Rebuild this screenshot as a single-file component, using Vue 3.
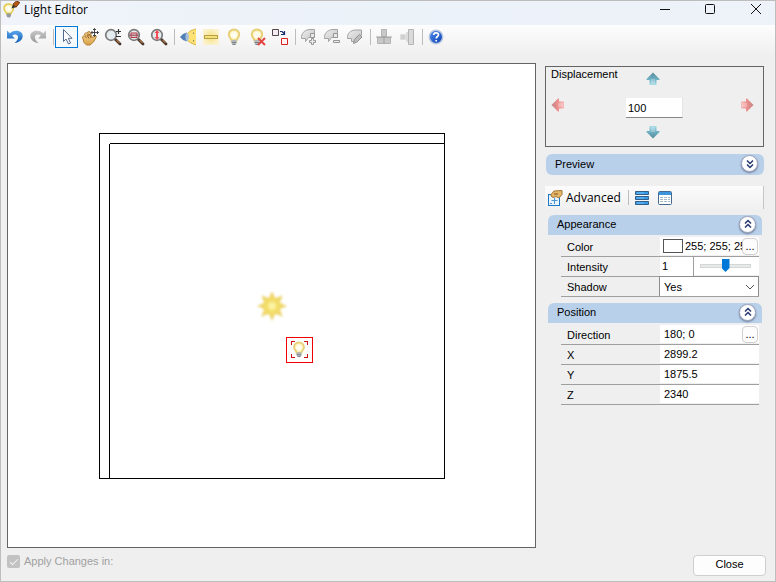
<script setup>
import { ref } from 'vue'

const displacement = ref('100')
const color = ref('255; 255; 255')
const intensity = ref('1')
const level = ref(50)
const shadow = ref('Yes')
const direction = ref('180; 0')
const coordinates = ref([
  { name: 'X', value: '2899.2' },
  { name: 'Y', value: '1875.5' },
  { name: 'Z', value: '2340' }
])
</script>

<template>
  <div class="window">
    <svg class="defs" aria-hidden="true">
      <defs>
        <linearGradient id="blue" x1="0" y1="0" x2="0" y2="1"><stop offset="0" stop-color="#5aa5ee" /><stop offset="1" stop-color="#1360b5" /></linearGradient>
        <linearGradient id="grey" x1="0" y1="0" x2="0" y2="1"><stop offset="0" stop-color="#c9c9c9" /><stop offset="1" stop-color="#989898" /></linearGradient>
        <linearGradient id="greyfill" x1="0" y1="0" x2="1" y2="1"><stop offset="0" stop-color="#ededed" /><stop offset="1" stop-color="#c4c4c4" /></linearGradient>
        <linearGradient id="teal" x1="0" y1="0" x2="0" y2="1"><stop offset="0" stop-color="#57899a" /><stop offset="0.55" stop-color="#6fb2c4" /><stop offset="1" stop-color="#a9dce8" /></linearGradient>
        <linearGradient id="pink" x1="0" y1="0" x2="0" y2="1"><stop offset="0" stop-color="#c48686" /><stop offset="0.55" stop-color="#ee8f8f" /><stop offset="1" stop-color="#f8bcbc" /></linearGradient>
        <linearGradient id="ball" x1="0" y1="0" x2="1" y2="1"><stop offset="0" stop-color="#4d8cf0" /><stop offset="1" stop-color="#0b3fae" /></linearGradient>
        <linearGradient id="hand" x1="0" y1="0" x2="0" y2="1"><stop offset="0" stop-color="#f9dc9c" /><stop offset="1" stop-color="#d9a045" /></linearGradient>
        <radialGradient id="glass"><stop offset="0" stop-color="#ffffff" /><stop offset="0.55" stop-color="#fffbe0" /><stop offset="1" stop-color="#f3e08c" /></radialGradient>
        <radialGradient id="glow"><stop offset="0" stop-color="#f8e27a" /><stop offset="0.6" stop-color="#f9ebaa" /><stop offset="1" stop-color="#fbf2cc" /></radialGradient>
        <radialGradient id="sun"><stop offset="0" stop-color="#fffcc0" /><stop offset="0.4" stop-color="#f3dc63" /><stop offset="1" stop-color="#e9d382" /></radialGradient>
        <filter id="soft" x="-20%" y="-20%" width="140%" height="140%"><feGaussianBlur stdDeviation="1" /></filter>
      </defs>
      <symbol id="bulb" viewBox="0 0 18 18">
        <path d="M9 1.500C5.700 1.500 3.700 3.800 3.700 6.500C3.700 9 6 10.300 6.400 12.500H11.600C12 10.300 14.300 9 14.300 6.500C14.300 3.800 12.300 1.500 9 1.500Z" fill="url(#glass)" stroke="#e6cf74" stroke-width="1.800" />
        <path d="M6.500 12H11.500V15L10.200 17H7.800L6.500 15Z" fill="#b4b8ba" />
        <path d="M6.500 14.500H11.500M7.500 16.500H10.500" stroke="#7c8488" />
      </symbol>
      <symbol id="lens" viewBox="0 0 18 18">
        <path d="M11 11L16 16" stroke="#46352c" stroke-width="2.800" stroke-linecap="round" />
        <path d="M12.500 12L15.500 15" stroke="#a9713f" stroke-width="1.300" />
        <circle cx="7" cy="7" r="5.300" fill="#e4ecf0" stroke="#7a7a7a" stroke-width="1.700" />
      </symbol>
      <symbol id="lamp" viewBox="0 0 18 18">
        <path d="M1.500 8.500C2 4.500 5.500 1.500 10 1.500H14.500V9.500H8.500L5.500 13.500V10.500H1.500Z" fill="url(#greyfill)" stroke="#a3a3a3" />
        <path d="M10.500 5.500H14.500V9.500H10.500Z" fill="#e8e8e8" stroke="#969696" />
      </symbol>
      <symbol id="arrow-shape" viewBox="0 0 14 14">
        <path d="M7 0.500L13.500 7V8H10.500V13H3.500V8H0.500V7Z" />
        <path d="M5 12V7H9V12Z" fill="#ffffff" fill-opacity="0.250" />
      </symbol>
    </svg>

    <header class="titlebar">
      <svg class="app-icon" viewBox="0 0 18 18" aria-hidden="true">
        <path d="M7 3C3.800 3 2 5 2 7.500C2 9.700 4 10.800 4.500 12.500H9C9.500 10.800 11.500 9.700 11.500 7.500C11.500 5 9.700 3 7 3Z" fill="url(#glass)" stroke="#e2cb50" stroke-width="1.500" />
        <path d="M4.500 12.500H9V15L7.800 16.500H5.700L4.500 15Z" fill="#969a9b" />
        <path d="M9.500 7.500L11 3.500L14 6.200Z" fill="#333" />
        <path d="M11 3.200L14.500 0L17.800 1.500L14 6.200Z" fill="#b45a14" stroke="#75350a" />
      </svg>
      <h1>Light Editor</h1>
      <div class="window-buttons">
        <button type="button" aria-label="Minimize"><svg viewBox="0 0 12 12"><path d="M1 6.500H11" /></svg></button>
        <button type="button" aria-label="Maximize"><svg viewBox="0 0 12 12"><rect x="1.500" y="1.500" width="9" height="9" rx="1" /></svg></button>
        <button type="button" aria-label="Close window"><svg viewBox="0 0 12 12"><path d="M1 1L11 11M11 1L1 11" /></svg></button>
      </div>
    </header>

    <nav class="toolbar" aria-label="Tools">
      <button type="button" aria-label="Undo"><svg viewBox="0 0 18 18"><path d="M1 2.500V10.500H9L6.200 7.800C8 5.800 11.500 6 12 8.500C12.300 11 11 13 8.500 15C13.500 14.500 17 11.500 16.700 7.500C16.300 2.500 8.500 1 3.800 5.300Z" fill="url(#blue)" /></svg></button>
      <button type="button" aria-label="Redo" disabled><svg viewBox="0 0 18 18"><path d="M17 2.500V10.500H9L11.800 7.800C10 5.800 6.500 6 6 8.500C5.700 11 7 13 9.500 15C4.500 14.500 1 11.500 1.300 7.500C1.700 2.500 9.500 1 14.200 5.300Z" fill="url(#grey)" /></svg></button>
      <span class="sep"></span>
      <button type="button" class="active" aria-label="Select"><svg viewBox="0 0 18 18"><path d="M5.500 1.500V13.500L8 11L10.500 16L12.500 15L10.300 10.300H14Z" fill="#fff" stroke="#55698f" /></svg></button>
      <button type="button" aria-label="Pan"><svg viewBox="0 0 18 18"><path d="M1.500 9L3 7.500L5.500 10L3.500 6L5 4.500L8 8L6.500 4L8.500 3.500L10.500 7.500L11.500 10L14 7.500L15.500 8.500L12.500 14L9 17H5.500L3 14.500Z" fill="url(#hand)" stroke="#b67f34" /><path d="M6 7L8 10.500M8.500 6L10 10" stroke="#8c5c22" /><path d="M13.500 0.500V8M10 4.500H17.500M12 2L13.500 0.500L15 2M12 7L13.500 8.500L15 7M11.500 3L10 4.500L11.500 6M16 3L17.500 4.500L16 6" fill="none" stroke="#333" stroke-width="0.900" /></svg></button>
      <button type="button" aria-label="Zoom in or out"><svg viewBox="0 0 18 18"><use href="#lens" /><path d="M12 3.500H17M14.500 1V6M12 8.500H17" stroke="#333" stroke-width="1.200" /></svg></button>
      <button type="button" aria-label="Zoom window"><svg viewBox="0 0 18 18"><use href="#lens" /><path d="M4 5H10V9.500H4Z" fill="#d8c9cb" stroke="#bc3746" /><path d="M2.500 7.200H11.500" stroke="#8f3f4b" /></svg></button>
      <button type="button" aria-label="Zoom extents"><svg viewBox="0 0 18 18"><use href="#lens" /><path d="M7 2L9.500 5H8V9H9.500L7 12L4.500 9H6V5H4.500Z" fill="#f04d59" /></svg></button>
      <span class="sep"></span>
      <button type="button" aria-label="Spot light"><svg viewBox="0 0 18 18"><path d="M7 6.500L12 2.500L17 1V17L12 15L7 11.500Z" fill="#ffe174" /><path d="M8 6L12 2.500L17 1M8 12L12 15L17 17" fill="none" stroke="#dcb73f" /><path d="M1 9L4 6L8 4.500V13.500L4 12Z" fill="#527fb5" /><path d="M8 4.500C10.500 6 10.500 12 8 13.500C6 12 6 6 8 4.500Z" fill="#a7c0dd" /><path d="M14.500 4.500V6M14.500 12V13.500" stroke="#857f68" /></svg></button>
      <button type="button" aria-label="Linear light"><svg viewBox="0 0 18 18"><rect x="1" y="1" width="16" height="16" fill="url(#glow)" /><rect x="2.500" y="7.500" width="13" height="3" fill="#f4df7a" stroke="#b5a247" /></svg></button>
      <button type="button" aria-label="Point light"><svg viewBox="0 0 18 18"><use href="#bulb" /></svg></button>
      <button type="button" aria-label="Delete light"><svg viewBox="0 0 18 18"><use href="#bulb" /><path d="M10 10L17 17M17 10L10 17" stroke="#e14444" stroke-width="2" /></svg></button>
      <button type="button" aria-label="Replace light"><svg viewBox="0 0 18 18"><path d="M1.500 1.500H7.500V7.500H1.500Z" fill="#f4edf1" stroke="#55454d" /><path d="M10.500 10.500H16.500V16.500H10.500Z" fill="#fff2f2" stroke="#dc2020" /><path d="M9 3.500H11L13 5.500M13.500 3V6.500H10" fill="none" stroke="#192e70" stroke-width="1.200" /></svg></button>
      <span class="sep"></span>
      <button type="button" aria-label="Add lamp" disabled><svg viewBox="0 0 18 18"><use href="#lamp" /><path d="M11.500 10.500H13.500V12.500H15.500V14.500H13.500V16.500H11.500V14.500H9.500V12.500H11.500Z" fill="#eee" stroke="#969696" /></svg></button>
      <button type="button" aria-label="Remove lamp" disabled><svg viewBox="0 0 18 18"><use href="#lamp" /><path d="M10.500 12.500H16.500V14.500H10.500Z" fill="#eee" stroke="#969696" /></svg></button>
      <button type="button" aria-label="Edit lamp" disabled><svg viewBox="0 0 18 18"><path d="M1.500 8.500C2 4.500 5.500 2 10 2H15.500V7L9 13.500H5.500V10.500H1.500Z" fill="url(#greyfill)" stroke="#a3a3a3" /><path d="M7.500 15.500L8.500 11.500L13.500 6.500L16 9L11 14Z" fill="#bdbdbd" stroke="#919191" /></svg></button>
      <span class="sep"></span>
      <button type="button" aria-label="Align horizontally" disabled><svg viewBox="0 0 18 18"><path d="M6.500 1.500H11.500V8.500H6.500ZM2.500 9.500H15.500V15.500H2.500Z" fill="#c8c8c8" stroke="#b4b4b4" /><path d="M1 9H17M9 9V16" stroke="#a0a0a0" /></svg></button>
      <button type="button" aria-label="Align vertically" disabled><svg viewBox="0 0 18 18"><path d="M2.500 6.500H7.500V11.500H2.500Z" fill="#d0d0d0" stroke="#dedede" /><path d="M10.500 1.500H15.500V16.500H10.500Z" fill="#dadada" stroke="#b4b4b4" /><path d="M9 4V14" stroke="#c1c1c1" /></svg></button>
      <span class="sep"></span>
      <button type="button" aria-label="Help"><svg viewBox="0 0 18 18"><circle cx="9" cy="9" r="6.700" fill="url(#ball)" stroke="#b9c8e0" stroke-width="1.500" /><path d="M6.700 7C6.700 4 11.500 4.200 11.500 6.800C11.500 8.500 9.200 8.500 9.200 10.500M9.200 12V13.500" fill="none" stroke="#fff" stroke-width="1.700" /></svg></button>
    </nav>

    <main class="content">
      <section class="canvas" aria-label="Plan view">
        <svg viewBox="0 0 527 483">
          <g fill="none" stroke="#000" shape-rendering="crispEdges">
            <rect x="91.500" y="69.500" width="345" height="345" />
            <path d="M101.500 414V80M102 79.500H436" />
          </g>
          <g transform="translate(264 242)" filter="url(#soft)">
            <path d="M0 -15L3.300 -8L10.800 -10.800L8 -3.300L15 0L8 3.300L10.800 10.800L3.300 8L0 15L-3.300 8L-10.800 10.800L-8 3.300L-15 0L-8 -3.300L-10.800 -10.800L-3.300 -8Z" fill="url(#sun)" />
          </g>
          <rect x="278.500" y="273.500" width="26" height="25" fill="#fff" stroke="#f00000" shape-rendering="crispEdges" />
          <use href="#bulb" x="282" y="277" width="18" height="17" />
          <path d="M287 277.500H283.500V281M296 277.500H299.500V281M287 293.500H283.500V290M296 293.500H299.500V290" fill="none" stroke="#d01010" shape-rendering="crispEdges" />
        </svg>
      </section>

      <aside class="side">
        <div class="displacement">
          <label for="displacement">Displacement</label>
          <button type="button" class="up" aria-label="Move up"><svg viewBox="0 0 14 14"><use href="#arrow-shape" fill="url(#teal)" /></svg></button>
          <button type="button" class="left" aria-label="Move left"><svg viewBox="0 0 14 14"><use href="#arrow-shape" fill="url(#pink)" transform="rotate(-90 7 7)" /></svg></button>
          <input id="displacement" v-model="displacement" type="text">
          <button type="button" class="right" aria-label="Move right"><svg viewBox="0 0 14 14"><use href="#arrow-shape" fill="url(#pink)" transform="rotate(90 7 7)" /></svg></button>
          <button type="button" class="down" aria-label="Move down"><svg viewBox="0 0 14 14"><use href="#arrow-shape" fill="url(#teal)" transform="rotate(180 7 7)" /></svg></button>
        </div>

        <div class="bar preview">
          <h2>Preview</h2>
          <button type="button" aria-label="Expand preview"><svg viewBox="0 0 12 12"><path d="M3 2.500L6 5.500L9 2.500M3 6.500L6 9.500L9 6.500" /></svg></button>
        </div>

        <div class="tools">
          <button type="button" class="advanced">
            <svg viewBox="0 0 16 16" aria-hidden="true"><rect x="1.500" y="4.500" width="11" height="11" fill="#eaf4fd" stroke="#1d78ca" /><path d="M4.500 10.500H10.500M7.500 8V14M3 13.500H5" stroke="#4c94d3" /><path d="M4 4.500L7 1L15 0.500V4.500L12 8L9 6.500L6 7.500L4 6Z" fill="#e5b568" stroke="#a0763a" /><path d="M7 4H11" stroke="#7c5524" /></svg>
            Advanced
          </button>
          <span class="sep"></span>
          <button type="button" aria-label="Categories"><svg viewBox="0 0 16 16"><path d="M1.500 1.500H14.500V4.500H1.500ZM1.500 6.500H14.500V9.500H1.500ZM1.500 11.500H14.500V14.500H1.500Z" fill="#369be9" stroke="#345e86" /><path d="M3 3H10M3 8H10M3 13H10" stroke="#70bdf5" /></svg></button>
          <button type="button" aria-label="List"><svg viewBox="0 0 16 16"><rect x="1.500" y="1.500" width="13" height="13" rx="1" fill="#fff" stroke="#436a92" /><path d="M2 3.500H14" stroke="#3b95dd" stroke-width="3" /><path d="M3 7.500H6M7 7.500H10M11 7.500H13M3 9.500H6M7 9.500H10M11 9.500H13M3 11.500H6M7 11.500H10M11 11.500H13" stroke="#a6b9cc" /></svg></button>
        </div>

        <section class="group">
          <div class="bar">
            <h2>Appearance</h2>
            <button type="button" aria-label="Collapse appearance"><svg viewBox="0 0 12 12"><path d="M3 5.500L6 2.500L9 5.500M3 9.500L6 6.500L9 9.500" /></svg></button>
          </div>
          <div class="rows">
            <div class="row">
              <label for="color">Color</label>
              <div class="value">
                <span class="swatch"></span>
                <input id="color" v-model="color" class="tight" type="text">
                <button type="button" class="more" aria-label="Choose color">...</button>
              </div>
            </div>
            <div class="row">
              <label for="intensity">Intensity</label>
              <div class="value">
                <input id="intensity" v-model="intensity" class="amount" type="text">
                <input v-model="level" class="slider" type="range" min="0" max="100" aria-label="Intensity level">
              </div>
            </div>
            <div class="row">
              <label for="shadow">Shadow</label>
              <div class="value boxed">
                <select id="shadow" v-model="shadow">
                  <option>Yes</option>
                  <option>No</option>
                </select>
                <svg class="chevron" viewBox="0 0 10 6" aria-hidden="true"><path d="M1 1L5 5L9 1" /></svg>
              </div>
            </div>
          </div>
        </section>

        <section class="group">
          <div class="bar">
            <h2>Position</h2>
            <button type="button" aria-label="Collapse position"><svg viewBox="0 0 12 12"><path d="M3 5.500L6 2.500L9 5.500M3 9.500L6 6.500L9 9.500" /></svg></button>
          </div>
          <div class="rows">
            <div class="row">
              <label for="direction">Direction</label>
              <div class="value">
                <input id="direction" v-model="direction" type="text">
                <button type="button" class="more" aria-label="Edit direction">...</button>
              </div>
            </div>
            <div v-for="axis in coordinates" :key="axis.name" class="row">
              <label :for="'axis-' + axis.name">{{ axis.name }}</label>
              <div class="value">
                <input :id="'axis-' + axis.name" v-model="axis.value" type="text">
              </div>
            </div>
          </div>
        </section>
      </aside>
    </main>

    <footer class="footer">
      <label class="apply">
        <input type="checkbox" checked disabled>
        Apply Changes in:
      </label>
      <button type="button" class="close">Close</button>
    </footer>
  </div>
</template>

<style>
body {
  margin: 0;
}
</style>

<style scoped>
.window {
  display: flex;
  flex-direction: column;
  box-sizing: border-box;
  min-height: 100vh;
  border: 1px solid #bdbdbd;
  background: #efefef;
  color: #000;
  font: 11px/14px "Liberation Sans", sans-serif;
}

.window *,
.window *::before {
  box-sizing: border-box;
}

.defs {
  position: absolute;
  width: 0;
  height: 0;
}

svg {
  display: block;
}

button {
  display: flex;
  align-items: center;
  justify-content: center;
  margin: 0;
  padding: 0;
  border: 0;
  background: none;
  color: inherit;
  font: inherit;
}

input,
select {
  min-width: 0;
  margin: 0;
  border: 0;
  border-radius: 0;
  outline: 0;
  background: #fff;
  color: inherit;
  font: inherit;
}

h1,
h2 {
  margin: 0;
  font: inherit;
}

.titlebar {
  display: flex;
  align-items: flex-start;
  height: 24px;
  padding-left: 1px;
  background: linear-gradient(90deg, #f0f3fa, #ebf2f8 50%, #eef2f9);
}

.app-icon {
  width: 18px;
  height: 18px;
}

.titlebar h1 {
  flex: 1;
  padding-left: 4px;
  font: 12px/18px "Open Sans", sans-serif;
}

.window-buttons {
  display: flex;
}

.window-buttons button {
  width: 45px;
  height: 16px;
}

.window-buttons button:last-child {
  width: 38px;
  margin-left: 5px;
}

.window-buttons svg {
  width: 12px;
  height: 12px;
  fill: none;
  stroke: #111;
}

.toolbar {
  display: flex;
  height: 38px;
  padding: 1px 2px;
  background: linear-gradient(#fdfdfd, #efefef 80%);
}

.toolbar button {
  width: 23px;
  height: 22px;
}

.toolbar svg {
  width: 18px;
  height: 18px;
}

.toolbar .active {
  border: 1px solid #0078d7;
  background: #f7fafd;
}

.toolbar .sep {
  width: 5px;
  height: 16px;
  margin: 3px 1px 0 0;
  border-right: 1px solid #bdbdbd;
}

.content {
  display: flex;
  flex: 1;
  gap: 9px;
  padding: 0 11px 0 6px;
}

.canvas {
  flex: 1;
  min-width: 0;
  border: 1px solid #646464;
  background: #fff;
}

.canvas svg {
  width: 100%;
  height: 100%;
}

.side {
  width: 219px;
  padding-top: 3px;
}

.displacement {
  display: grid;
  grid-template-columns: 75px 57px 1fr;
  grid-template-rows: 31px 20px 28px;
  padding: 0 9px 0 5px;
  border: 1px solid #646464;
}

.displacement label {
  grid-area: 1 / 1;
}

.displacement svg {
  width: 14px;
  height: 14px;
}

.displacement input {
  grid-area: 2 / 2;
  padding: 0 2px;
  border-right: 1px solid #e4e4e4;
  border-bottom: 1px solid #868686;
}

.up {
  grid-area: 1 / 2;
  align-items: flex-start;
  padding: 5px 3px 0 0;
}

.left {
  grid-area: 2 / 1;
  justify-content: flex-start;
  align-items: flex-start;
}

.right {
  grid-area: 2 / 3;
  justify-content: flex-end;
  align-items: flex-start;
}

.down {
  grid-area: 3 / 2;
  padding-right: 3px;
}

.bar {
  display: flex;
  align-items: center;
  justify-content: space-between;
  height: 20px;
  padding: 0 6px 2px 9px;
  border-radius: 6px 6px 0 0;
  background: #b9d0ea;
}

.bar button {
  width: 17px;
  height: 17px;
  border: 1px solid #9aa3bb;
  border-radius: 50%;
  background: #fff;
  box-shadow: 0 1px 2px #6f7c98;
}

.bar svg {
  width: 12px;
  height: 12px;
  fill: none;
  stroke: #26376e;
  stroke-width: 1.5;
}

.preview {
  height: 21px;
  margin: 7px 0 11px 1px;
  border-radius: 6px;
}

.tools {
  display: flex;
  align-items: center;
  height: 23px;
  margin-bottom: 6px;
  padding-left: 2px;
  border-right: 1px solid #c6c6c6;
  background: linear-gradient(#fcfcfc, #f0f0f0);
}

.tools svg {
  width: 16px;
  height: 16px;
}

.tools button {
  width: 23px;
}

.tools .advanced {
  gap: 3px;
  width: auto;
  font: 12px/18px "Open Sans", sans-serif;
}

.tools .sep {
  width: 8px;
  height: 15px;
  margin-right: 2px;
  border-right: 1px solid #bdbdbd;
}

.group {
  margin: 0 2px 6px 3px;
}

.rows {
  padding: 2px 3px 0 13px;
}

.row {
  display: flex;
  height: 20px;
  border-bottom: 1px solid #9f9f9f;
}

.row label {
  width: 99px;
  padding: 3px 0 0 6px;
}

.value {
  display: flex;
  flex: 1;
  align-items: center;
  min-width: 0;
  height: 18px;
  background: #fff;
}

.value input {
  flex: 1;
  height: 18px;
  padding: 0 4px;
}

.value .tight {
  padding: 0 0 0 2px;
}

.value .amount {
  flex: 0 0 34px;
  height: 19px;
  padding: 0 2px;
  border-right: 1px solid #9f9f9f;
}

.swatch {
  width: 20px;
  height: 14px;
  margin-left: 3px;
  border: 1px solid #555;
}

.more {
  width: 16px;
  height: 17px;
  margin-right: 1px;
  border: 1px solid #cfcfcf;
  border-radius: 4px;
  background: #fdfdfd;
}

.value .slider {
  appearance: none;
  margin: 0 8px 0 6px;
  padding: 0;
}

.slider::-webkit-slider-runnable-track {
  height: 4px;
  border: 1px solid #d6d6d6;
  background: #e7eaea;
}

.slider::-webkit-slider-thumb {
  appearance: none;
  width: 8px;
  height: 13px;
  margin-top: -6px;
  background: #0078d7;
  clip-path: polygon(0 0, 100% 0, 100% 70%, 50% 100%, 0 70%);
}

.boxed {
  position: relative;
  height: 20px;
  margin-top: -1px;
  margin-left: -1px;
  border: 1px solid #8c8c8c;
  border-bottom: 0;
}

.boxed select {
  width: 100%;
  height: 18px;
  padding: 0 4px;
  appearance: none;
}

.chevron {
  position: absolute;
  top: 7px;
  right: 3px;
  width: 10px;
  height: 6px;
  fill: none;
  stroke: #555;
  pointer-events: none;
}

.footer {
  display: flex;
  justify-content: space-between;
  padding: 7px 9px 5px 6px;
}

.apply {
  display: flex;
  gap: 4px;
  height: 13px;
  color: #a0a0a0;
  line-height: 13px;
}

.apply input {
  display: grid;
  place-items: center;
  width: 13px;
  height: 13px;
  border-radius: 2px;
  appearance: none;
  background: #c2c2c2;
}

.apply input::before {
  width: 8px;
  height: 4px;
  margin-top: -2px;
  border: solid #f4f4f4;
  border-width: 0 0 1px 1px;
  content: "";
  transform: rotate(-45deg);
}

.close {
  width: 73px;
  height: 21px;
  padding-bottom: 3px;
  border: 1px solid #cfcfcf;
  border-radius: 4px;
  background: #fdfdfd;
}
</style>
